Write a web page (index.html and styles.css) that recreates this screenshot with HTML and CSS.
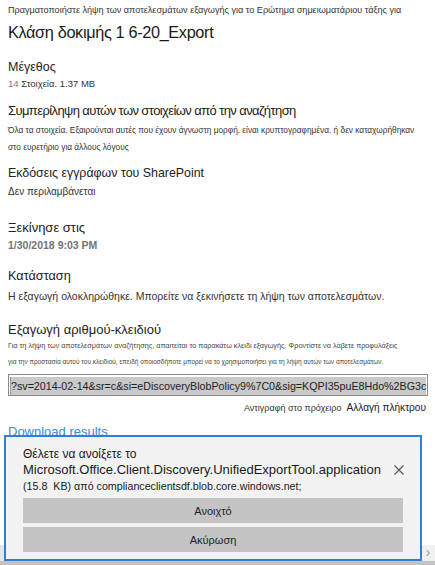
FILE: index.html
```html
<!DOCTYPE html>
<html lang="el">
<head>
<meta charset="utf-8">
<title>Λήψη αποτελεσμάτων εξαγωγής</title>
<link rel="stylesheet" href="styles.css">
</head>
<body>
<main class="pane">
  <p class="intro">Πραγματοποιήστε λήψη των αποτελεσμάτων εξαγωγής για το Ερώτημα σημειωματάριου τάξης για</p>
  <h1 class="title">Κλάση δοκιμής 1 6-20_Export</h1>

  <section class="field f-size">
    <h2 class="label">Μέγεθος</h2>
    <p class="value"><span class="muted">14</span> Στοιχεία. 1.37 MB</p>
  </section>

  <section class="field f-include">
    <h2 class="label big">Συμπερίληψη αυτών των στοιχείων από την αναζήτηση</h2>
    <p class="note">Όλα τα στοιχεία. Εξαιρούνται αυτές που έχουν άγνωστη μορφή. είναι κρυπτογραφημένα. ή δεν καταχωρήθηκαν<br>στο ευρετήριο για άλλους λόγους</p>
  </section>

  <section class="field f-versions">
    <h2 class="label">Εκδόσεις εγγράφων του SharePoint</h2>
    <p class="value small">Δεν περιλαμβάνεται</p>
  </section>

  <section class="field f-started">
    <h2 class="label">Ξεκίνησε στις</h2>
    <p class="value date">1/30/2018 9:03 PM</p>
  </section>

  <section class="field f-status">
    <h2 class="label">Κατάσταση</h2>
    <p class="value status">Η εξαγωγή ολοκληρώθηκε. Μπορείτε να ξεκινήσετε τη λήψη των αποτελεσμάτων.</p>
  </section>

  <section class="field f-key">
    <h2 class="label key-head">Εξαγωγή αριθμού-κλειδιού</h2>
    <p class="fine fine-1">Για τη λήψη των αποτελεσμάτων αναζήτησης, απαιτείται το παρακάτω κλειδί εξαγωγής. Φροντίστε να λάβετε προφυλάξεις</p>
    <p class="fine fine-2">για την προστασία αυτού του κλειδιού, επειδή οποιοσδήποτε μπορεί να το χρησιμοποιήσει για τη λήψη αυτών των αποτελεσμάτων.</p>
    <div class="keybox"><span class="keytext">?sv=2014-02-14&amp;sr=c&amp;si=eDiscoveryBlobPolicy9%7C0&amp;sig=KQPI35puE8Hdo%2BG3c</span></div>
    <div class="keyactions">
      <a class="copy">Αντιγραφή στο πρόχειρο</a>
      <a class="change">Αλλαγή πλήκτρου</a>
    </div>
  </section>

  <a class="download">Download results</a>
</main>

<div class="hscroll">
  <span class="hs-left"></span>
  <span class="hs-right">&#x203A;</span>
</div>
<div class="taskbar"></div>

<div class="prompt" role="dialog">
  <div class="prompt-head">
    <p class="prompt-text"><span class="q">Θέλετε να ανοίξετε το</span><br><span class="file">Microsoft.Office.Client.Discovery.UnifiedExportTool.application</span><br><span class="src">(15.8&nbsp; KB) από complianceclientsdf.blob.core.windows.net;</span></p>
    <button class="close" aria-label="Κλείσιμο">
      <svg width="10" height="10" viewBox="0 0 10 10"><path d="M0.5 0.5L9.5 9.5M9.5 0.5L0.5 9.5" stroke="#555" stroke-width="1.1" fill="none"/></svg>
    </button>
  </div>
  <div class="prompt-actions">
    <button class="pbtn">Ανοιχτό</button>
    <button class="pbtn">Ακύρωση</button>
  </div>
</div>
</body>
</html>
```
FILE: styles.css
```css
html, body {
  margin: 0;
  padding: 0;
  background: #fff;
}
body {
  font-family: "Liberation Sans", Arial, sans-serif;
  color: #222;
  width: 435px;
  height: 565px;
  overflow: hidden;
  position: relative;
}
p, h1, h2 { margin: 0; font-weight: normal; }

.pane {
  padding: 2px 0 0 8px;
}
.intro {
  font-size: 9.1px;
  line-height: 16px;
  color: #333;
  white-space: nowrap;
}
.title {
  margin-top: 0;
  font-size: 16.3px;
  letter-spacing: -0.35px;
  line-height: 28px;
  color: #1a1a1a;
  white-space: nowrap;
}

.label {
  font-size: 12.7px;
  line-height: 18px;
  color: #222;
  white-space: nowrap;
}
.label.big {
  font-size: 13px;
  letter-spacing: -0.6px;
  line-height: 20px;
}
.value {
  font-size: 9.5px;
  line-height: 16px;
  color: #333;
  white-space: nowrap;
}
.value .muted { color: #7a7a7a; }
.value.small { font-size: 10px; }
.value.date { color: #737373; font-weight: bold; font-size: 10.5px; }
.value.status { font-size: 10.5px; }

.f-size { margin-top: 12px; }
.f-size .label { font-size: 12.5px; }
.f-include { margin-top: 9px; }
.note {
  margin-top: 1px;
  font-size: 8.3px;
  line-height: 17px;
  color: #333;
  white-space: nowrap;
}
.f-versions { margin-top: 8px; }
.f-versions .label { font-size: 12.4px; }
.f-versions .value { margin-top: 2px; }
.f-started { margin-top: 19px; }
.f-started .label { font-size: 13px; }
.f-status { margin-top: 14px; }
.f-status .value { margin-top: 3px; }
.f-key { margin-top: 18px; }
.key-head {
  font-size: 13px;
  line-height: 16px;
}

.fine {
  line-height: 16px;
  color: #444;
  white-space: nowrap;
}
.fine-1 { font-size: 7.25px; }
.fine-2 { font-size: 6.5px; }
.keybox {
  margin-top: 4px;
  width: 420px;
  height: 22px;
  box-sizing: border-box;
  border: 1px solid #8a8a8a;
  padding: 1px;
  overflow: hidden;
  white-space: nowrap;
}
.keytext {
  display: inline-block;
  height: 18px;
  line-height: 18px;
  font-size: 10.7px;
  color: #222;
  background: #c9c9c9;
  border-left: 1px solid #9a9a9a;
}
.keyactions {
  margin-top: 4px;
  display: flex;
  justify-content: flex-end;
  align-items: baseline;
  gap: 5px;
  padding-right: 9px;
  line-height: 16px;
}
.copy { font-size: 9px; color: #333; }
.change { font-size: 10.1px; color: #222; }

.download {
  display: block;
  margin-top: 7px;
  font-size: 13px;
  line-height: 18px;
  color: #3c8ad8;
}

/* horizontal scrollbar strip at the window bottom */
.hscroll {
  position: absolute;
  left: 0;
  right: 0;
  top: 545px;
  height: 16px;
  background: #f0f0f0;
  display: flex;
  justify-content: space-between;
}
.hs-left {
  width: 4px;
  background: #e6e6e6;
  border-right: 1px solid #d6d6d6;
}
.hs-right {
  width: 14px;
  font-size: 14px;
  line-height: 15px;
  color: #a0a0a0;
  text-align: center;
}
.taskbar {
  position: absolute;
  left: 0;
  right: 0;
  top: 561px;
  height: 4px;
  background: #c3c3c3;
}

/* open-file prompt docked above the bottom bar */
.prompt {
  position: absolute;
  left: 4px;
  top: 435px;
  width: 418px;
  height: 126px;
  box-sizing: border-box;
  border: 2px solid #2f7fd8;
  background: #f2f2f2;
  padding: 9px 16px 0 17px;
}
.prompt-head {
  display: flex;
  align-items: flex-start;
}
.prompt-text {
  flex: 1;
  font-size: 10.7px;
  line-height: 16px;
  color: #1a1a1a;
  white-space: nowrap;
}
.prompt-text .q { font-size: 12px; }
.prompt-text .file { font-size: 13px; }
.close {
  margin-top: 19px;
  border: 0;
  padding: 0;
  background: transparent;
  width: 10px;
  height: 10px;
  display: flex;
}
.prompt-actions {
  margin-top: 4px;
  display: flex;
  flex-direction: column;
  gap: 4px;
  width: 380px;
}
.pbtn {
  height: 25px;
  border: 0;
  background: #c4c4c4;
  font-family: inherit;
  font-size: 11px;
  color: #222;
  padding: 0;
}
```
